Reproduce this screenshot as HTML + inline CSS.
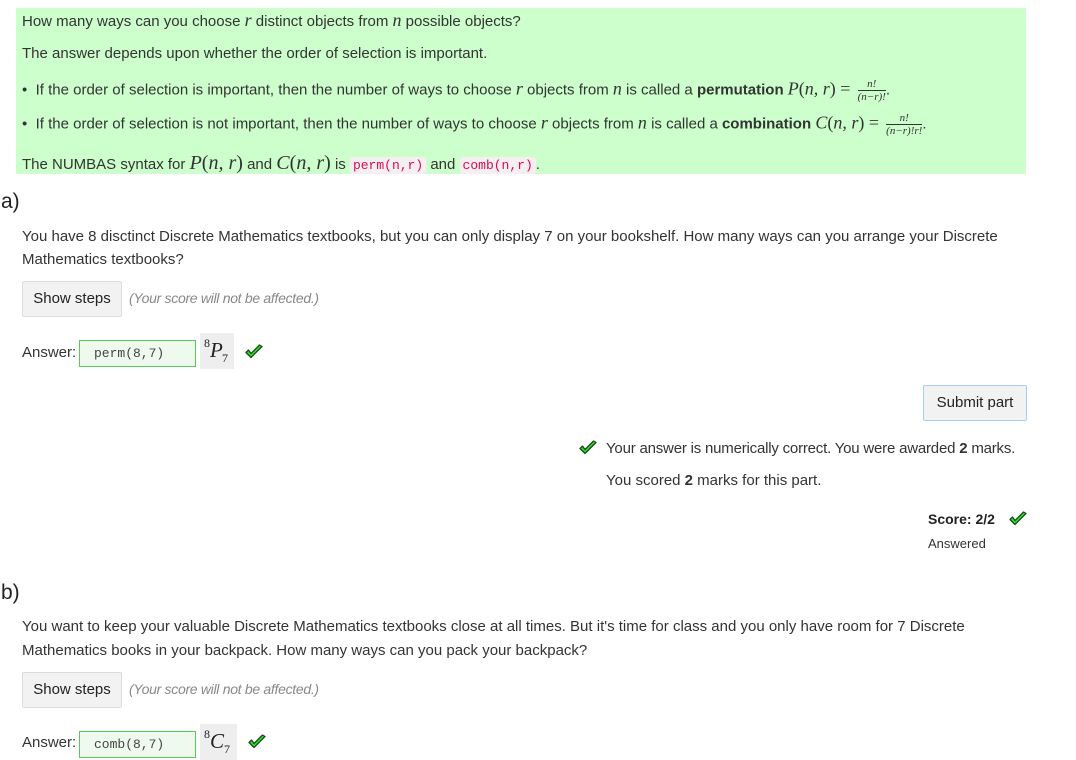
<!DOCTYPE html>
<html><head><meta charset="utf-8"><style>
body{margin:0;width:1076px;height:756px;overflow:hidden;background:#fff;font-family:"Liberation Sans",sans-serif;font-size:15px;color:#333;position:relative}
.a{position:absolute;white-space:nowrap}
.m{font-family:"Liberation Serif",serif;font-style:italic;font-size:18px}
.mr{font-family:"Liberation Serif",serif;font-size:18px}
code{font-family:"Liberation Mono",monospace;font-size:13px;color:#d0104c;background:#f7eef2;padding:1px 3px;border-radius:3px}
.btn{position:absolute;background:#f2f2f2;border:1px solid #ddd;border-radius:2px;font-size:15px;color:#222;text-align:center}
.note{color:#888;font-style:italic;font-size:14px;letter-spacing:-0.3px}
.inp{position:absolute;border:1px solid #5c5;background:#effaef;font-family:"Liberation Mono",monospace;font-size:13px;color:#444;box-sizing:border-box;padding:5px 0 0 14px}
.tag{position:absolute;background:#eee;font-family:"Liberation Serif",serif;color:#222}
.tag i{position:absolute;font-size:21px;top:5px}
.tag b{position:absolute;font-weight:normal;font-size:12px}
.fr{display:inline-block;vertical-align:middle;text-align:center;font-family:"Liberation Serif",serif;font-style:italic;font-size:11px;line-height:12px;margin-left:3px}
.fr span{display:block;border-top:1px solid #333}
</style></head><body>
<svg width="0" height="0" style="position:absolute"><defs><symbol id="ck" viewBox="0 0 20 16"><path d="M2 8.5 L7 13.5 L18 2.5 L15.5 1 L7 9.5 L4.5 6 Z" fill="#2dde2d" stroke="#1a4a1a" stroke-width="1.3" stroke-linejoin="round"/></symbol></defs></svg>
<div style="position:absolute;left:16px;top:8px;width:1010px;height:166px;background:#ccffcc"></div>
<div class="a" style="left:22px;top:10px">How many ways can you choose <span class="m">r</span> distinct objects from <span class="m">n</span> possible objects?</div>
<div class="a" style="left:22px;top:45px">The answer depends upon whether the order of selection is important.</div>
<div class="a" style="left:22px;top:78px">• &nbsp;If the order of selection is important, then the number of ways to choose <span class="m">r</span> objects from <span class="m">n</span> is called a <b>permutation</b> <span class="m">P</span><span class="mr">(</span><span class="m">n, r</span><span class="mr">) =</span> <span class="fr">n!<span>(n−r)!</span></span>.</div>
<div class="a" style="left:22px;top:112px">• &nbsp;If the order of selection is not important, then the number of ways to choose <span class="m">r</span> objects from <span class="m">n</span> is called a <b>combination</b> <span class="m">C</span><span class="mr">(</span><span class="m">n, r</span><span class="mr">) =</span> <span class="fr">n!<span>(n−r)!r!</span></span>.</div>
<div class="a" style="left:22px;top:152px">The NUMBAS syntax for <span class="m" style="font-size:20px">P</span><span class="mr" style="font-size:20px">(</span><span class="m" style="font-size:20px">n, r</span><span class="mr" style="font-size:20px">)</span> and <span class="m" style="font-size:20px">C</span><span class="mr" style="font-size:20px">(</span><span class="m" style="font-size:20px">n, r</span><span class="mr" style="font-size:20px">)</span> is <code>perm(n,r)</code> and <code>comb(n,r)</code>.</div>

<div class="a" style="left:1px;top:190px;font-size:21px;color:#222">a)</div>
<div class="a" style="left:22px;top:228px">You have 8 disctinct Discrete Mathematics textbooks, but you can only display 7 on your bookshelf. How many ways can you arrange your Discrete</div>
<div class="a" style="left:22px;top:251px">Mathematics textbooks?</div>
<div class="btn" style="left:22px;top:281px;width:98px;height:34px;line-height:34px">Show steps</div>
<div class="a note" style="left:129px;top:290px">(Your score will not be affected.)</div>
<div class="a" style="left:22px;top:344px">Answer:</div>
<div class="inp" style="left:79px;top:340px;width:117px;height:27px">perm(8,7)</div>
<div class="tag" style="left:200px;top:333px;width:34px;height:36px"><b style="left:4px;top:3px">8</b><i style="left:10px">P</i><b style="left:22px;top:18px">7</b></div>
<svg style="position:absolute;left:244px;top:344px" width="20" height="16"><use href="#ck"/></svg>

<div class="btn" style="left:923px;top:385px;width:102px;height:34px;line-height:34px;border-color:#a8cfe8">Submit part</div>
<svg style="position:absolute;left:578px;top:440px" width="20" height="16"><use href="#ck"/></svg>
<div class="a" style="left:606px;top:440px;letter-spacing:-0.2px">Your answer is numerically correct. You were awarded <b>2</b> marks.</div>
<div class="a" style="left:606px;top:472px">You scored <b>2</b> marks for this part.</div>
<div class="a" style="left:928px;top:511px;font-weight:bold;color:#222;font-size:14px">Score: 2/2</div>
<svg style="position:absolute;left:1008px;top:511px" width="20" height="16"><use href="#ck"/></svg>
<div class="a" style="left:928px;top:536px;font-size:13px">Answered</div>

<div class="a" style="left:1px;top:581px;font-size:21px;color:#222">b)</div>
<div class="a" style="left:22px;top:618px">You want to keep your valuable Discrete Mathematics textbooks close at all times. But it's time for class and you only have room for 7 Discrete</div>
<div class="a" style="left:22px;top:642px">Mathematics books in your backpack. How many ways can you pack your backpack?</div>
<div class="btn" style="left:22px;top:672px;width:98px;height:34px;line-height:34px">Show steps</div>
<div class="a note" style="left:129px;top:681px">(Your score will not be affected.)</div>
<div class="a" style="left:22px;top:734px">Answer:</div>
<div class="inp" style="left:79px;top:731px;width:117px;height:27px">comb(8,7)</div>
<div class="tag" style="left:200px;top:724px;width:37px;height:36px"><b style="left:4px;top:3px">8</b><i style="left:10px">C</i><b style="left:24px;top:18px">7</b></div>
<svg style="position:absolute;left:247px;top:734px" width="20" height="16"><use href="#ck"/></svg>
</body></html>
